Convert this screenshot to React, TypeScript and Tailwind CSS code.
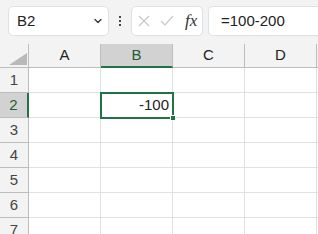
import { ChevronDown } from 'lucide-react'

const cols = ['A', 'B', 'C', 'D']
const rows = [1, 2, 3, 4, 5, 6, 7]

export default function App() {
  return (
    <div
      className="w-[318px] h-[234px] overflow-hidden bg-white text-[#222]"
      style={{ fontFamily: '"Liberation Sans", Arial, sans-serif' }}
    >
      {/* Formula bar */}
      <div className="h-[44px] bg-[#f3f3f3] flex items-start pt-[6px] pl-[8px]">
        <div className="w-[101px] h-[30px] bg-white border border-[#e1e1e1] rounded-[5px] flex items-center pl-[8px] pr-[4px]">
          <span className="flex-1 text-[15px]">B2</span>
          <ChevronDown className="w-[12px] h-[12px] text-[#333]" strokeWidth={2.5} />
        </div>
        <div className="w-[22px] h-[30px] flex flex-col items-center justify-center gap-[2px]">
          <span className="w-[2px] h-[2px] bg-[#444]" />
          <span className="w-[2px] h-[2px] bg-[#444]" />
          <span className="w-[2px] h-[2px] bg-[#444]" />
        </div>
        <div className="w-[72px] h-[30px] bg-white border border-[#e1e1e1] rounded-[5px] flex items-center pl-[6px]">
          <svg width="12" height="12" viewBox="0 0 12 12" className="mr-[10px]">
            <path d="M1 1 L11 11 M11 1 L1 11" stroke="#c8c8c8" strokeWidth="1.2" fill="none" />
          </svg>
          <svg width="14" height="12" viewBox="0 0 14 12" className="mr-[11px]">
            <path d="M1 6 L5 10 L13 1" stroke="#c8c8c8" strokeWidth="1.2" fill="none" />
          </svg>
          <span
            className="italic text-[17px] text-[#333]"
            style={{ fontFamily: '"Liberation Serif", "Times New Roman", serif' }}
          >
            fx
          </span>
        </div>
        <div className="ml-[5px] flex-1 h-[30px] bg-white border border-[#e1e1e1] border-r-0 rounded-l-[5px] flex items-center pl-[12px] text-[15px]">
          =100-200
        </div>
      </div>

      {/* Column headers */}
      <div className="flex h-[24px] bg-[#f3f3f3]">
        <div className="w-[29px] shrink-0 border-r border-b border-[#bdbdbd] relative">
          <svg width="18" height="12" viewBox="0 0 18 12" className="absolute left-[9px] top-[9px]">
            <path d="M18 0 L18 12 L0 12 Z" fill="#b9b9b9" />
          </svg>
        </div>
        {cols.map((c) => (
          <div
            key={c}
            className={
              c === 'B'
                ? 'w-[72px] shrink-0 border-r border-[#bdbdbd] border-b-2 border-b-[#217346] bg-[#d2d2d2] text-[#1d5c36] text-[15px] flex items-center justify-center'
                : 'w-[72px] shrink-0 border-r border-b border-[#bdbdbd] text-[15px] flex items-center justify-center'
            }
          >
            {c}
          </div>
        ))}
        <div className="flex-1 border-b border-[#bdbdbd]" />
      </div>

      {/* Rows */}
      {rows.map((r) => (
        <div key={r} className="flex h-[25px]">
          <div
            className={
              r === 2
                ? 'w-[29px] shrink-0 border-b border-[#bdbdbd] border-r-2 border-r-[#217346] bg-[#d2d2d2] text-[#1d5c36] text-[15px] flex items-center justify-center'
                : 'w-[29px] shrink-0 border-r border-b border-[#bdbdbd] bg-[#f3f3f3] text-[#444] text-[15px] flex items-center justify-center'
            }
          >
            {r}
          </div>
          {cols.map((c) => (
            <div
              key={c}
              className="w-[72px] shrink-0 border-r border-b border-[#e1e1e1] relative"
            >
              {r === 2 && c === 'B' && (
                <div className="absolute -left-[1px] -top-[1px] w-[74px] h-[27px] border-2 border-[#217346] z-10 flex items-center justify-end pr-[3px] text-[15px] text-[#222]">
                  -100
                  <span className="absolute -right-[4px] -bottom-[4px] w-[6px] h-[6px] bg-[#217346] border border-white" />
                </div>
              )}
            </div>
          ))}
          <div className="flex-1 border-b border-[#e1e1e1]" />
        </div>
      ))}
    </div>
  )
}
